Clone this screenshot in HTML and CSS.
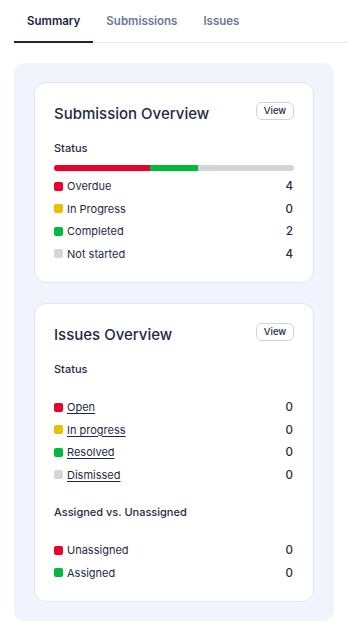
FILE: index.html
```html
<!DOCTYPE html>
<html>
<head>
<meta charset="utf-8">
<link rel="stylesheet" href="styles.css">
</head>
<body>
<nav class="tabs">
  <div class="tab active">Summary</div>
  <div class="tab">Submissions</div>
  <div class="tab">Issues</div>
  <div class="tab-rest"></div>
</nav>
<main class="panel">
  <section class="card">
    <div class="card-head">
      <h2 class="card-title">Submission Overview</h2>
      <button class="view-btn">View</button>
    </div>
    <div class="section-label">Status</div>
    <div class="bar">
      <span class="seg red" style="width:40%"></span>
      <span class="seg green" style="width:20%"></span>
    </div>
    <ul class="legend">
      <li><span class="sw red"></span><span class="name">Overdue</span><span class="num">4</span></li>
      <li><span class="sw yellow"></span><span class="name">In Progress</span><span class="num">0</span></li>
      <li><span class="sw green"></span><span class="name">Completed</span><span class="num">2</span></li>
      <li><span class="sw grey"></span><span class="name">Not started</span><span class="num">4</span></li>
    </ul>
  </section>
  <section class="card">
    <div class="card-head">
      <h2 class="card-title">Issues Overview</h2>
      <button class="view-btn">View</button>
    </div>
    <div class="section-label">Status</div>
    <div class="bar empty"></div>
    <ul class="legend">
      <li><span class="sw red"></span><a class="name link" href="#">Open</a><span class="num">0</span></li>
      <li><span class="sw yellow"></span><a class="name link" href="#">In progress</a><span class="num">0</span></li>
      <li><span class="sw green"></span><a class="name link" href="#">Resolved</a><span class="num">0</span></li>
      <li><span class="sw grey"></span><a class="name link" href="#">Dismissed</a><span class="num">0</span></li>
    </ul>
    <div class="section-label second">Assigned vs. Unassigned</div>
    <div class="bar empty"></div>
    <ul class="legend">
      <li><span class="sw red"></span><span class="name">Unassigned</span><span class="num">0</span></li>
      <li><span class="sw green"></span><span class="name">Assigned</span><span class="num">0</span></li>
    </ul>
  </section>
</main>
</body>
</html>
```
FILE: styles.css
```css
* { box-sizing: border-box; }
html, body { margin: 0; padding: 0; background: #fff; }
body {
  font-family: Inter, "Noto Sans", sans-serif;
  color: #1f2a44;
  width: 348px;
}
.tabs {
  display: flex;
  margin-left: 14px;
  height: 43px;
  align-items: stretch;
}
.tab {
  padding: 0 13px;
  font-size: 11.5px;
  font-weight: 600;
  color: #6b7894;
  display: flex;
  align-items: center;
  padding-bottom: 1px;
  border-bottom: 1px solid #e6e8ee;
}
.tab.active {
  color: #1a2540;
  border-bottom: 2px solid #1a2540;
  padding-bottom: 0;
}
.tab-rest {
  flex: 1;
  border-bottom: 1px solid #e6e8ee;
}
.panel {
  margin: 20px 14px 0 14px;
  background: #f0f4fc;
  border-radius: 10px;
  padding: 19px 20px 19px;
  display: flex;
  flex-direction: column;
  gap: 20px;
}
.card {
  background: #fff;
  border: 1px solid #e2e5ee;
  border-radius: 12px;
  padding: 19px 19px 17px 19px;
}
.card-head {
  display: flex;
  justify-content: space-between;
  align-items: flex-start;
}
.card-title {
  margin: 0;
  font-size: 15px;
  font-weight: 500;
  line-height: 22px;
  padding-top: 1px;
  color: #1f2a44;
}
.view-btn {
  font-family: inherit;
  font-size: 9.5px;
  font-weight: 500;
  color: #1f2a44;
  background: #fff;
  border: 1px solid #cfd3de;
  border-radius: 6px;
  width: 38px;
  height: 18px;
  padding: 0;
  line-height: 16px;
}
.section-label {
  margin-top: 15px;
  font-size: 11px;
  font-weight: 500;
  line-height: 16px;
}
.section-label.second {
  margin-top: 18px;
}
.bar {
  margin-top: 9px;
  height: 6px;
  border-radius: 3px;
  background: #d4d4d6;
  display: flex;
  overflow: hidden;
}
.bar.empty { background: transparent; }
.seg { display: block; height: 100%; }
.seg.red { background: #e8002f; }
.seg.green { background: #00b83c; }
.legend {
  list-style: none;
  margin: 4px 0 0 0;
  padding: 0;
}
.legend li {
  display: flex;
  align-items: center;
  height: 22.5px;
  font-size: 11px;
}
.sw {
  width: 9px;
  height: 9px;
  border-radius: 2px;
  margin-right: 4px;
  flex: none;
}
.sw.red { background: #e8002f; }
.sw.yellow { background: #e6c100; }
.sw.green { background: #00b83c; }
.sw.grey { background: #d6d6d8; }
.name { flex: 1; color: #1f2a44; }
.link { flex: 0 0 auto; text-decoration: underline; text-underline-offset: 2px; }
.legend li .link + .num { margin-left: auto; }
.num { font-weight: 500; margin-right: 1px; font-size: 11.5px; }
```
